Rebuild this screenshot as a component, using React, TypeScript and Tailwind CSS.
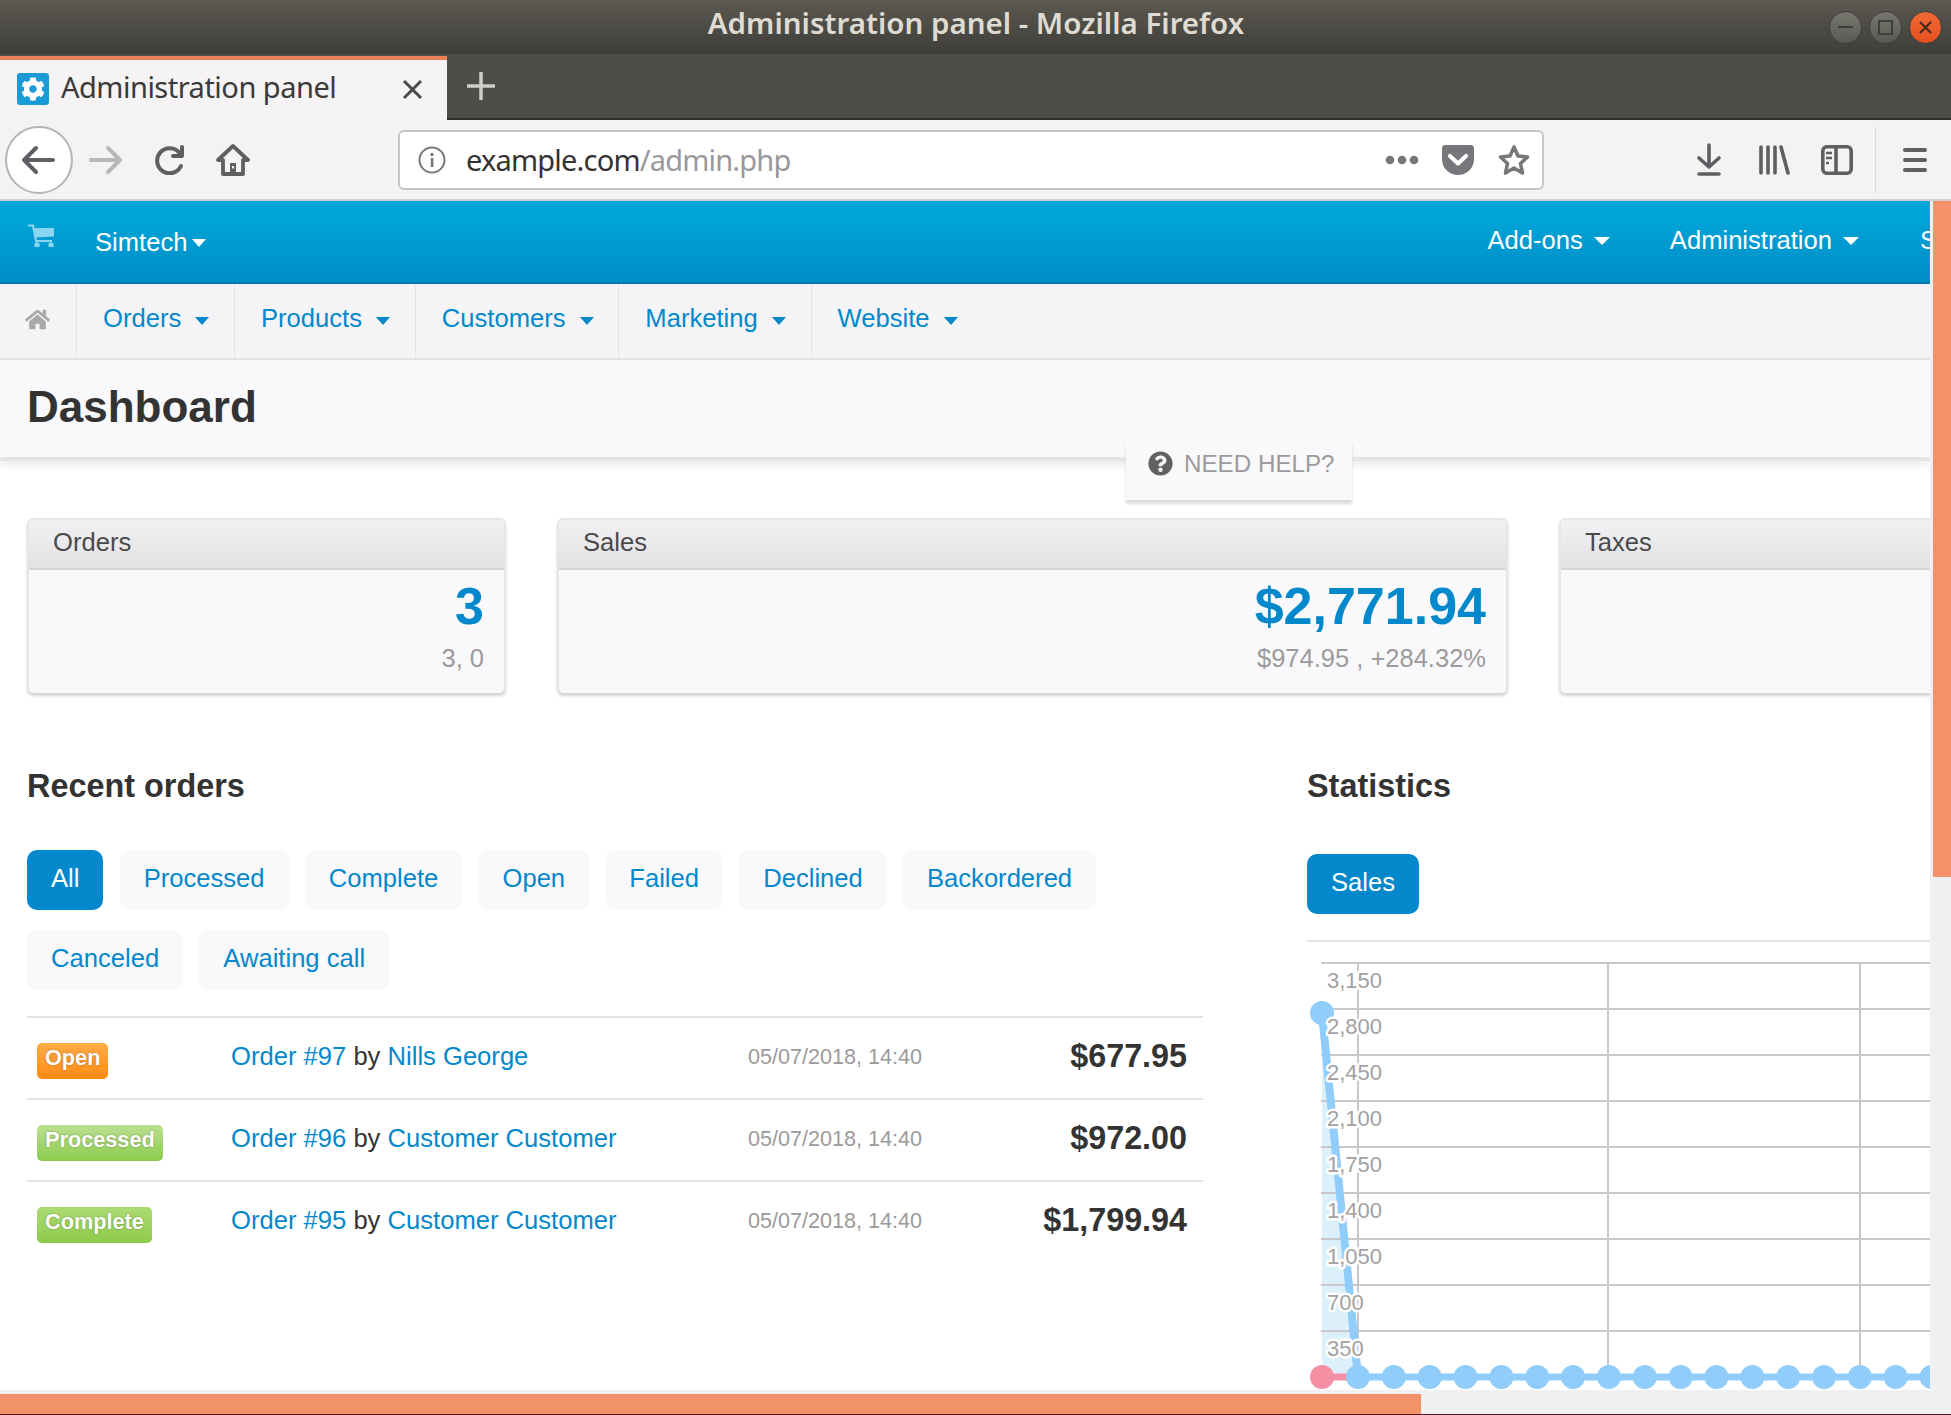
import React from "react";
import { FaCog, FaHome, FaQuestionCircle } from "react-icons/fa";

const Caret = ({ className = "" }: { className?: string }) => (
  <span className={`inline-block w-0 h-0 border-x-[7.5px] border-x-transparent border-t-[8px] ${className}`} />
);

const NavItem = ({ label }: { label: string }) => (
  <div className="flex items-center gap-[14px] pl-[26px] pr-[24.8px] pb-[5px] h-full border-r border-[#e4e4e6] text-[#0388cc]">
    <span>{label}</span>
    <Caret className="border-t-[#0388cc] mt-[5px]" />
  </div>
);

const Card = ({ title, value, sub, className }: { title: string; value?: string; sub?: string; className: string }) => (
  <div className={`flex-none h-[175px] rounded-[6px] border-x-2 border-t-2 border-[#e6e6e8] shadow-[0_3px_3px_#d4d4d6] overflow-hidden bg-[#f9f9fb] ${className}`}>
    <div className="h-[50px] pl-[24px] pb-[4px] flex items-center bg-gradient-to-b from-[#f1f1f3] to-[#e2e2e4] border-b-2 border-[#d6d6d8] text-[#4a4a4a]">{title}</div>
    <div className="pr-[20px] text-right">
      <div className="mt-[5px] h-[62px] leading-[62px] text-[52px] font-bold text-[#0388cc]">{value}</div>
      <div className="mt-[5px] text-[#9c9a9c] text-[25.5px] leading-[32px]">{sub}</div>
    </div>
  </div>
);

const Pill = ({ label, active }: { label: string; active?: boolean }) => (
  <div className={`h-[60px] px-[24px] pb-[3px] rounded-[10px] flex items-center ${active ? "bg-[#0388cc] text-white" : "bg-[#f9f9fb] text-[#0388cc]"}`}>{label}</div>
);

const Row = ({ status, cls, num, who, amt }: { status: string; cls: string; num: string; who: string; amt: string }) => (
  <div className="h-[82px] border-t-2 border-[#e3e3e3] flex items-center">
    <div className="w-[204px] pl-[10px] -mt-[1px]">
      <span className={`inline-block h-[36px] leading-[29px] px-[8px] rounded-[5px] text-white font-bold text-[21.7px] [text-shadow:0_0_2px_rgba(0,0,0,0.35)] ${cls}`}>{status}</span>
    </div>
    <div className="w-[517px] -mt-[3px]">
      <span className="text-[#0388cc]">Order #{num}</span> <span className="text-[#333]">by</span> <span className="text-[#0388cc]">{who}</span>
    </div>
    <div className="text-[21.6px] text-[#9c9a9c] -mt-[1px]">05/07/2018, 14:40</div>
    <div className="flex-1 text-right pr-[16px] text-[32.3px] font-bold text-[#333] -mt-[3px]">{amt}</div>
  </div>
);

const Chart = () => {
  const ys = Array.from({ length: 10 }, (_, i) => 13 + i * 46);
  const labels = ["3,150", "2,800", "2,450", "2,100", "1,750", "1,400", "1,050", "700", "350"];
  const pts = Array.from({ length: 17 }, (_, i) => 58 + i * 35.85);
  return (
    <svg width="630" height="440" className="block flex-none">
      <polygon points="22,63 58,427 22,427" fill="#dcf0fc" />
      <line x1="58" y1="13" x2="58" y2="427" stroke="#c8c8ca" strokeWidth="2" />
      <line x1="308" y1="13" x2="308" y2="427" stroke="#c8c8ca" strokeWidth="2" />
      <line x1="560" y1="13" x2="560" y2="427" stroke="#c8c8ca" strokeWidth="2" />
      {ys.map((y) => (
        <line key={y} x1="21" y1={y} x2="630" y2={y} stroke="#c8c8ca" strokeWidth="2" />
      ))}
      <line x1="22" y1="63" x2="58" y2="427" stroke="#90cdfb" strokeWidth="8" />
      <line x1="22" y1="427" x2="58" y2="427" stroke="#f48fa4" strokeWidth="7" />
      <line x1="58" y1="427" x2="630" y2="427" stroke="#90cdfb" strokeWidth="7" />
      <circle cx="22" cy="427" r="12" fill="#f48fa4" />
      <circle cx="22" cy="63" r="12" fill="#90cdfb" />
      {pts.map((x) => (
        <circle key={x} cx={x} cy="427" r="12" fill="#90cdfb" />
      ))}
      {labels.map((t, i) => (
        <text key={t} x="27" y={37.5 + i * 46} fontSize="22" fill="#a3a1a3" stroke="#fff" strokeWidth="5" strokeLinejoin="round" className="[paint-order:stroke]">
          {t}
        </text>
      ))}
    </svg>
  );
};

const WinButton = ({ children, close }: { children: React.ReactNode; close?: boolean }) => (
  <div className={`w-[33px] h-[33px] rounded-full border border-[#3f3e3a] flex items-center justify-center bg-gradient-to-b ${close ? "from-[#ee6a34] to-[#e64f1e]" : "from-[#78776f] to-[#5a5953]"}`}>{children}</div>
);

export default function App() {
  return (
    <div className="w-[1951px] h-[1415px] overflow-hidden flex flex-col bg-white text-[25.6px] font-['Liberation_Sans',Arial,sans-serif]">
      {/* window title */}
      <div className="h-[54px] flex-none flex items-center pl-[10px] pr-[9px] bg-gradient-to-b from-[#5b5951] to-[#3f3e39]">
        <div className="flex-1" />
        <div className="text-[29.5px] font-semibold text-[#dfdbd2] font-['Noto_Sans',sans-serif] -mt-[8px]">Administration panel - Mozilla Firefox</div>
        <div className="flex-1 flex justify-end gap-[7px]">
          <WinButton><div className="w-[15px] h-[2px] bg-[#3f3e3a]" /></WinButton>
          <WinButton><div className="w-[15px] h-[15px] border-2 border-[#3f3e3a]" /></WinButton>
          <WinButton close>
            <svg width="15" height="15" viewBox="0 0 15 15"><path d="M2 2L13 13M13 2L2 13" stroke="#3f2a20" strokeWidth="2" /></svg>
          </WinButton>
        </div>
      </div>

      {/* tab strip */}
      <div className="h-[66px] flex-none flex bg-[#4f4d48] border-b-2 border-[#2f2e2b]">
        <div className="w-[447px] h-[66px] flex-none mt-[2px] flex items-center bg-[#f5f3f3] border-t-4 border-[#ea8157] text-[#3a3a3a]">
          <div className="ml-[17px] w-[32px] h-[32px] bg-[#1a9bd7] rounded-[3px] flex items-center justify-center text-white -mt-[4px]"><FaCog size={24} /></div>
          <div className="ml-[12px] w-[341px] text-[29px] tracking-[-0.5px] font-['Noto_Sans',sans-serif] -mt-[8px] leading-[40px]">Administration panel</div>
          <svg width="21" height="21" viewBox="0 0 21 21" className="-mt-[4px]"><path d="M2 2L19 19M19 2L2 19" stroke="#4a4a4a" strokeWidth="3" /></svg>
        </div>
        <svg width="30" height="30" viewBox="0 0 30 30" className="ml-[19px] mt-[17px]"><path d="M15 1V29M1 15H29" stroke="#cfcfc8" strokeWidth="3.5" /></svg>
      </div>

      {/* toolbar */}
      <div className="h-[81px] flex-none flex items-center bg-[#f5f3f2] border-b-2 border-[#cfcfcf] text-[#5f5e63]">
        <div className="ml-[5px] w-[68px] h-[68px] flex-none rounded-full bg-white border-2 border-[#b4b4b4] flex items-center justify-center">
          <svg width="34" height="30" viewBox="0 0 34 30" fill="none" stroke="#5f5e63" strokeWidth="4" strokeLinecap="round" strokeLinejoin="round" className="-ml-[2px]"><path d="M32 15H3M15 3L3 15L15 27" /></svg>
        </div>
        <svg width="34" height="30" viewBox="0 0 34 30" fill="none" stroke="#b7b6b8" strokeWidth="4" strokeLinecap="round" strokeLinejoin="round" className="ml-[16px]"><path d="M2 15H31M19 3L31 15L19 27" /></svg>
        <svg width="32" height="30" viewBox="0 0 32 30" fill="none" stroke="#5f5e63" strokeWidth="4" strokeLinecap="round" strokeLinejoin="round" className="ml-[31px]"><path d="M27 21A12.5 12.5 0 1 1 25.5 8" /><path d="M28 2V11H19" /></svg>
        <svg width="34" height="34" viewBox="0 0 34 34" fill="none" stroke="#5f5e63" strokeWidth="3.8" strokeLinejoin="round" className="ml-[30px]"><path d="M2 17L17 3L32 17H27V31H7V17Z" /><rect x="14" y="20" width="6" height="10" fill="#5f5e63" stroke="none" /><rect x="16" y="23" width="2" height="2.5" fill="#f5f3f2" stroke="none" /></svg>
        <div className="ml-[148px] w-[1146px] h-[60px] flex-none rounded-[6px] bg-white border-2 border-[#c6c6c6] flex items-center">
          <svg width="28" height="28" viewBox="0 0 28 28" fill="none" className="ml-[18px]"><circle cx="14" cy="14" r="12.5" stroke="#77767a" strokeWidth="2" /><rect x="12.8" y="12" width="2.6" height="9" fill="#77767a" /><circle cx="14" cy="8.5" r="1.7" fill="#77767a" /></svg>
          <div className="ml-[20px] text-[29px] font-['Noto_Sans',sans-serif] text-[#333] tracking-[-0.8px]">example.com<span className="text-[#99989c]">/admin.php</span></div>
          <div className="flex-1" />
          <svg width="34" height="10" viewBox="0 0 34 10" fill="#77767a"><circle cx="5" cy="5" r="4.3" /><circle cx="17" cy="5" r="4.3" /><circle cx="29" cy="5" r="4.3" /></svg>
          <svg width="32" height="30" viewBox="0 0 32 30" className="ml-[23px]"><path d="M0 4C0 1 1 0 4 0H28C31 0 32 1 32 4V14C32 24 24 30 16 30C8 30 0 24 0 14Z" fill="#77767a" /><path d="M8 11L16 18.5L24 11" fill="none" stroke="#fff" strokeWidth="4.2" strokeLinecap="round" strokeLinejoin="round" /></svg>
          <svg width="32" height="32" viewBox="0 0 32 32" fill="none" stroke="#77767a" strokeWidth="3.6" strokeLinejoin="round" className="ml-[24px]"><path d="M16 3L20 12L29.5 13L22.5 19.5L24.5 29L16 24L7.5 29L9.5 19.5L2.5 13L12 12Z" /></svg>
          <div className="w-[12px]" />
        </div>
        <svg width="26" height="33" viewBox="0 0 26 33" fill="none" stroke="#5f5e63" strokeWidth="3.6" strokeLinecap="round" strokeLinejoin="round" className="ml-[152px]"><path d="M13 2V24M3 15L13 24L23 15M3 31H23" /></svg>
        <svg width="32" height="30" viewBox="0 0 32 30" fill="none" stroke="#5f5e63" strokeWidth="3.6" strokeLinecap="round" className="ml-[36px]"><path d="M3 2V28M10 2V28M17 2V28M23 2L30 28" /></svg>
        <svg width="32" height="30" viewBox="0 0 32 30" fill="none" stroke="#5f5e63" strokeWidth="3.6" className="ml-[31px]"><rect x="1.8" y="1.8" width="28.4" height="26.4" rx="4" /><path d="M15 2V28" /><path d="M5 8H11M5 13H11M5 18H8" strokeWidth="2.4" /></svg>
        <div className="ml-[22px] w-px h-[66px] bg-[#dcdcdc]" />
        <div className="ml-[27px] w-[24px] flex flex-col gap-[6px]">
          <div className="h-[4px] rounded-full bg-[#5f5e63]" /><div className="h-[4px] rounded-full bg-[#5f5e63]" /><div className="h-[4px] rounded-full bg-[#5f5e63]" />
        </div>
      </div>

      {/* page viewport */}
      <div className="flex-1 min-h-0 flex flex-col bg-[#f0eff1]">
        <div className="flex-1 min-h-0 flex">
          <div className="w-[1930px] flex-none overflow-hidden bg-white relative">
            <div className="h-[83px] flex items-center bg-gradient-to-b from-[#00a9d9] to-[#008ec8] border-b-2 border-[#0078ab] text-white">
              <svg width="27" height="23" viewBox="0 0 27 23" className="ml-[28px] -mt-[13px]" fill="none" stroke="#8ad5f0" strokeWidth="2.2"><path d="M0 1.5H5L8 17H24" /><path d="M6 4H26V12.5L7.5 13.5Z" fill="#8ad5f0" stroke="none" /><circle cx="9" cy="21" r="1.6" fill="#8ad5f0" /><circle cx="23" cy="21" r="1.6" fill="#8ad5f0" /></svg>
              <div className="ml-[40px] flex items-center gap-[5px] mt-[1px]">Simtech<Caret className="border-t-white mt-[3px]" /></div>
              <div className="flex-1" />
              <div className="flex items-center gap-[11px] -mt-[3px]">Add-ons<Caret className="border-x-[8px] border-t-white mt-[3px]" /></div>
              <div className="ml-[60px] flex items-center gap-[11px] -mt-[3px]">Administration<Caret className="border-x-[8px] border-t-white mt-[3px]" /></div>
              <div className="ml-[61px] w-[10px] overflow-hidden -mt-[3px]">S</div>
            </div>
            <div className="h-[76px] flex items-center bg-[#f4f4f6] border-b-2 border-[#e3e3e5]">
              <div className="w-[77px] h-full flex items-center justify-center border-r border-[#e4e4e6] text-[#a8a8a8] pb-[3px] pr-[2px]"><FaHome size={25} /></div>
              <NavItem label="Orders" />
              <NavItem label="Products" />
              <NavItem label="Customers" />
              <NavItem label="Marketing" />
              <div className="flex items-center gap-[14px] pl-[26px] pr-[24px] pb-[5px] h-full text-[#0388cc]">Website<Caret className="border-t-[#0388cc] mt-[5px]" /></div>
            </div>
            <div className="h-[97px] pl-[27px] pb-[4px] flex items-center bg-[#f9f9fb] shadow-[0_4px_0_#e5e5e7,0_9px_6px_#eeeeef] text-[44px] font-bold text-[#333]">Dashboard</div>
            <div className="absolute left-[1126px] top-[239px] w-[226px] h-[60px] flex items-center pl-[22px] pb-[12px] gap-[11px] bg-[#f9f9fb] shadow-[0_4px_3px_#dcdcde] text-[#9c9a9c] text-[24.2px]">
              <FaQuestionCircle size={25} className="text-[#616161] -mt-[2px]" />NEED HELP?
            </div>
            <div className="mt-[61px] pl-[27px] flex gap-[51px]">
              <Card title="Orders" value="3" sub="3, 0" className="w-[479px]" />
              <Card title="Sales" value="$2,771.94" sub="$974.95 , +284.32%" className="w-[951px]" />
              <Card title="Taxes" className="w-[500px]" />
            </div>
            <div className="mt-[73px] pl-[27px] flex gap-[104px]">
              <div className="w-[1176px] flex-none">
                <h2 className="h-[40px] leading-[40px] text-[32.4px] font-bold text-[#333]">Recent orders</h2>
                <div className="mt-[44px] flex flex-wrap gap-x-[16.2px] gap-y-[20px]">
                  {["All", "Processed", "Complete", "Open", "Failed", "Declined", "Backordered", "Canceled", "Awaiting call"].map((p, i) => (
                    <Pill key={p} label={p} active={i === 0} />
                  ))}
                </div>
                <div className="mt-[26px]">
                  <Row status="Open" cls="bg-gradient-to-b from-[#ffab45] to-[#ff8a0a]" num="97" who="Nills George" amt="$677.95" />
                  <Row status="Processed" cls="bg-gradient-to-b from-[#bce092] to-[#8ccb48]" num="96" who="Customer Customer" amt="$972.00" />
                  <Row status="Complete" cls="bg-gradient-to-b from-[#aedb74] to-[#8ccb48]" num="95" who="Customer Customer" amt="$1,799.94" />
                </div>
              </div>
              <div className="w-[623px] flex-none">
                <h2 className="h-[40px] leading-[40px] text-[32.4px] font-bold text-[#333]">Statistics</h2>
                <div className="mt-[48px] pb-[3px] w-[112px] h-[60px] rounded-[10px] bg-[#0388cc] text-white flex items-center justify-center">Sales</div>
                <div className="mt-[26px] h-[2px] bg-[#e3e3e3]" />
                <div className="-ml-[7px] mt-[8px]"><Chart /></div>
              </div>
            </div>
          </div>
          <div className="flex-1 pl-[3px]">
            <div className="h-[676px] bg-[#f5916a]" />
          </div>
        </div>
        <div className="h-[25px] flex-none pt-[4px] bg-[#f0eff1] border-b border-[#5a1228]">
          <div className="w-[1421px] h-full bg-[#f29268]" />
        </div>
      </div>
    </div>
  );
}
